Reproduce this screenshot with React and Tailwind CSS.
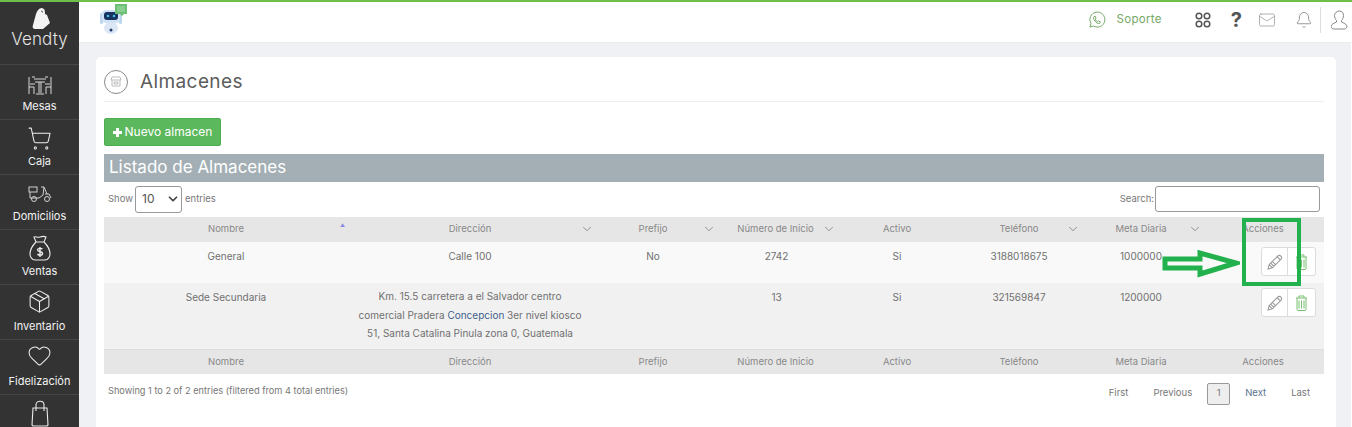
import React from "react";
import { ChevronDown, Bell, Mail, Heart, Package, ShoppingCart } from "lucide-react";

const F = { fontFamily: '"Inter", "Open Sans", sans-serif' };

function Tables() {
  return (
    <svg width="24" height="20" viewBox="0 0 24 20" fill="none" stroke="#d8d8d8" strokeWidth="1">
      <path d="M6 3h12M7 6h10M11 6v11M13 6v11M8 18h8M1 1v10h5v7M1 11v7M23 1v10h-5v7M23 11v7" />
      <path d="M2 8h5M17 8h5M4 1l3 0M17 1h3" />
    </svg>
  );
}
function Moto() {
  return (
    <svg width="24" height="18" viewBox="0 0 24 18" fill="none" stroke="#d0d0d0" strokeWidth="1">
      <rect x="1" y="2" width="8" height="5" />
      <path d="M2 7v6h9l4-3 1-8h-3M16 2l3 7M17 9h4l2 4" />
      <circle cx="6" cy="14" r="2.500" />
      <circle cx="19" cy="14" r="2.500" />
    </svg>
  );
}
function MoneyBag() {
  return (
    <svg width="22" height="26" viewBox="0 0 22 26" fill="none" stroke="#ececec" strokeWidth="1.100">
      <path d="M7 7 5 2c2-1 3 1 6 0s4-1 6 0l-2 5H7zM7 7c-3 3-6 7-6 12 0 3 2 6 5 6h10c3 0 5-3 5-6 0-5-3-9-6-12" />
      <path d="M13.500 14c-1-1-5-1-5 1s5 1 5 3.500-4 2-5 .5M11 12v10" strokeWidth="1.400" />
    </svg>
  );
}
function Bag() {
  return (
    <svg width="18" height="27" viewBox="0 0 18 27" fill="none" stroke="#ececec" strokeWidth="1.100">
      <path d="M2 8h14l1 17-1 1H2l-1-1z" />
      <path d="M5 11V5c0-5 8-5 8 0v6" />
    </svg>
  );
}
function Item({ icon, label, iconCls = "" }) {
  return (
    <div className="h-[55px] border-t border-[#464646] flex flex-col items-center shrink-0">
      <div className={`h-[31px] w-full flex items-end justify-center ${iconCls}`}>{icon}</div>
      <div className="mt-[3px] text-[11px] leading-[14px] text-[#f2f2f2]">{label}</div>
    </div>
  );
}
function Sidebar() {
  return (
    <aside className="w-[79px] shrink-0 h-full bg-[#333333] overflow-hidden flex flex-col">
      <div className="h-[62px] shrink-0 flex flex-col items-center pt-[6px]">
        <svg className="ml-[2px]" width="18" height="21" viewBox="0 0 18 21" fill="#f4f4f4">
          <path d="M4 6C5 3 7 0 10 0c3 1 3 3 3 6l2 1 3 8-7 6H3c-2 0-3-2-2-4z" />
          <path d="M9 3.500c1-1 2 0 1.500 1" stroke="#333" strokeWidth="0.800" fill="none" />
        </svg>
        <div className="text-[17px] leading-[20px] text-[#e4e4e4] tracking-[0.1px] font-light">Vendty</div>
      </div>
      <Item icon={<Tables />} label="Mesas" />
      <Item icon={<ShoppingCart size={25} strokeWidth={1} color="#eeeeee" />} label="Caja" />
      <Item icon={<Moto />} label="Domicilios" iconCls="pb-[3px]" />
      <Item icon={<MoneyBag />} label="Ventas" />
      <Item icon={<Package size={25} strokeWidth={1} color="#eeeeee" />} label="Inventario" iconCls="pb-[2px]" />
      <Item icon={<Heart size={25} strokeWidth={1} color="#eeeeee" />} label="Fidelización" iconCls="pb-[3px]" />
      <div className="h-[40px] border-t border-[#464646] flex justify-center pt-[5px] shrink-0"><Bag /></div>
    </aside>
  );
}
function Bot() {
  return (
    <svg width="28" height="31" viewBox="0 0 28 31">
      <ellipse cx="11" cy="24" rx="7" ry="6" fill="#dbe7f5" />
      <circle cx="11" cy="26" r="1.500" fill="#1f3a68" />
      <rect x="0" y="9" width="3" height="11" rx="1.500" fill="#bcd6f0" />
      <rect x="19" y="9" width="3" height="11" rx="1.500" fill="#bcd6f0" />
      <rect x="2" y="6" width="18" height="13" rx="4" fill="#cfe2f6" />
      <rect x="4" y="8" width="14" height="8" rx="3" fill="#17335f" />
      <circle cx="8" cy="12" r="1.300" fill="#3fc0e0" />
      <circle cx="14" cy="12" r="1.300" fill="#3fc0e0" />
      <path d="M15 0h12v10h-3l-2 2-2-2h-5z" fill="#6bbf73" />
      <path d="M17 3h8M17 5h8M17 7h8" stroke="#a8dcae" strokeWidth="1" />
    </svg>
  );
}
function Whatsapp() {
  return (
    <svg width="18" height="18" viewBox="0 0 18 18" fill="none" stroke="#76a867" strokeWidth="1">
      <path d="M2 16 3 12.500A7.500 7.500 0 1 1 5.500 15z" />
      <path d="M6 5.500c-1 1-.5 2.500 1 4.500s3 3 4.500 2.500l1-1.500-2-1-1 .7c-1-.5-2-1.700-2.300-2.700l.8-.8-.8-2z" />
    </svg>
  );
}
function UserBust() {
  return (
    <svg width="17" height="20" viewBox="0 0 17 20" fill="none" stroke="#888" strokeWidth="1">
      <path d="M8.500 1c2.700 0 4 2 4 4.500 0 2-1 4-2 5v1.500c2 1 5 2 5.500 4 .2 1.500-1 3-3 3H3c-2 0-3.200-1.500-3-3 .5-2 3.500-3 5.500-4v-1.500c-1-1-2-3-2-5C3.500 3 5.800 1 8.500 1z" />
    </svg>
  );
}
function Topbar() {
  return (
    <header className="h-[41px] shrink-0 bg-white flex items-center pl-[21px] pr-[4px] border-b border-[#ececec]">
      <div className="-mt-[5px]"><Bot /></div>
      <div className="ml-auto flex items-center -mt-[4px]">
        <Whatsapp />
        <span className="ml-[11px] text-[11.500px] text-[#76a867] tracking-[0.300px]">Soporte</span>
        <svg className="ml-[33px]" width="16" height="16" viewBox="0 0 16 16" fill="none" stroke="#555" strokeWidth="1.500">
          <circle cx="4" cy="4" r="2.800" /><circle cx="12" cy="4" r="2.800" /><circle cx="4" cy="12" r="2.800" /><circle cx="12" cy="12" r="2.800" />
        </svg>
        <span className="ml-[20px] text-[20px] leading-[20px] font-bold text-[#555]">?</span>
        <Mail className="ml-[16px]" size={18} strokeWidth={1} color="#9a9a9a" />
        <Bell className="ml-[19px]" size={18} strokeWidth={1} color="#777" />
        <div className="ml-[7px] w-px h-[26px] bg-[#dddddd]" />
        <div className="ml-[10px]"><UserBust /></div>
      </div>
    </header>
  );
}
const cols = [
  ["Nombre", "w-[244px]", 0, ""],
  ["Dirección", "w-[248px]", 1, "pr-[4px]"],
  ["Prefijo", "w-[122px]", 1, "pr-[8px]"],
  ["Número de Inicio", "w-[120px]", 1, "pr-[5px]"],
  ["Activo", "w-[118px]", 0, ""],
  ["Teléfono", "w-[126px]", 1, ""],
  ["Meta Diaria", "w-[122px]", 1, "pr-[4px]"],
  ["Acciones", "w-[120px]", 0, "pr-[2px]"],
];
function PencilIcon() {
  return (
    <svg width="16" height="16" viewBox="0 0 15 15" fill="none" stroke="#999" strokeWidth="1">
      <path d="M1 14l1-4 8-8c1-1 2-1 3 0s1 2 0 3l-8 8-4 1zM2 10l3 3M9.500 2.500l3 3M3.500 8.500l3 3M5 7l3 3" />
    </svg>
  );
}
function TrashIcon() {
  return (
    <svg width="13" height="16" viewBox="0 0 13 16" fill="none" stroke="#78c070" strokeWidth="1">
      <path d="M1 3h11M4 3V1h5v2M2 3v11.500c0 .5.500 1 1 1h7c.5 0 1-.5 1-1V3" />
      <path d="M4 5.500v8M6.500 5.500v8M9 5.500v8" />
    </svg>
  );
}
function Actions() {
  return (
    <div className="inline-flex h-[29px] bg-white border border-[#dcdcdc] rounded-[3px] mr-[8px] align-top">
      <div className="w-[26px] flex items-center justify-center border-r border-[#dcdcdc]"><PencilIcon /></div>
      <div className="w-[27px] flex items-center justify-center"><TrashIcon /></div>
    </div>
  );
}
function Td({ children, cls = "" }) {
  return <td className={`align-top text-center text-[10px] text-[#707070] pt-[7px] ${cls}`}>{children}</td>;
}
function Table() {
  return (
    <table className="w-[1220px] table-fixed border-collapse mt-[4px]">
      <colgroup>{cols.map((c) => <col key={c[0]} className={c[1]} />)}</colgroup>
      <thead>
        <tr className="h-[25px] bg-[#e6e6e6]">
          {cols.map((c, i) => (
            <th key={c[0]} className={`relative font-normal text-[9.500px] text-[#888] ${c[3]}`}>
              {c[0]}
              {c[2] === 1 && <ChevronDown className="absolute right-[2px] top-[5px]" size={14} strokeWidth={1} color="#555" />}
              {i === 0 && <span className="absolute right-[3px] top-[5px] text-[5px] text-[#8a8ae0]">▲</span>}
            </th>
          ))}
        </tr>
      </thead>
      <tbody>
        <tr className="h-[41px] bg-[#f9f9f9]">
          <Td>General</Td>
          <Td cls="pr-[4px]">Calle 100</Td>
          <Td cls="pr-[8px]">No</Td>
          <Td cls="pr-[3px]">2742</Td>
          <Td>Si</Td>
          <Td>3188018675</Td>
          <Td cls="pr-[4px]">1000000</Td>
          <td className="align-top text-right pt-[5px]"><Actions /></td>
        </tr>
        <tr className="h-[66px] bg-[#f1f1f1] border-b border-[#dddddd]">
          <Td>Sede Secundaria</Td>
          <td className="align-top text-center text-[10px] leading-[18.500px] text-[#707070] pt-[4px] pr-[4px]">
            <div>Km. 15.5 carretera a el Salvador centro</div>
            <div className="whitespace-nowrap">comercial Pradera <span className="text-[#3f5f8a]">Concepcion</span> 3er nivel kiosco</div>
            <div className="whitespace-nowrap">51, Santa Catalina Pinula zona 0, Guatemala</div>
          </td>
          <Td></Td>
          <Td cls="pr-[3px]">13</Td>
          <Td>Si</Td>
          <Td>321569847</Td>
          <Td cls="pr-[4px]">1200000</Td>
          <td className="align-top text-right pt-[5px]"><Actions /></td>
        </tr>
      </tbody>
      <tfoot>
        <tr className="h-[25px] bg-[#e6e6e6]">
          {cols.map((c) => (
            <th key={c[0]} className={`font-normal text-[9.500px] text-[#888] ${c[3]}`}>{c[0]}</th>
          ))}
        </tr>
      </tfoot>
    </table>
  );
}
function Annotation() {
  return (
    <>
      <div className="absolute left-[1242px] top-[218px] w-[59px] h-[68px] border-[4px] border-[#22b14c]" />
      <svg className="absolute left-[1162px] top-[249px]" width="78" height="30" viewBox="0 0 78 30" fill="none">
        <path d="M3 10H38V4L74 14 38 25V19H3z" stroke="#22b14c" strokeWidth="5" />
      </svg>
    </>
  );
}
export default function App() {
  return (
    <div className="relative w-[1352px] h-[427px] overflow-hidden bg-[#eff1f5] border-t-2 border-[#6cc04a]" style={F}>
      <div className="flex h-full">
        <Sidebar />
        <div className="flex-1 min-w-0 flex flex-col">
          <Topbar />
          <main className="flex-1 min-h-0 pt-[14px] pl-[17px] pr-[16px]">
            <section className="h-[400px] bg-white rounded-[5px] pt-[11px] px-[8px]">
              <div className="w-[1220px] h-[34px] flex items-center border-b border-[#eeeeee] pb-[6px]">
                <div className="w-[24px] h-[24px] rounded-full border border-[#8a8a8a] flex items-center justify-center">
                  <svg width="12" height="11" viewBox="0 0 12 11" fill="none" stroke="#bdbdbd"><path d="M1 4 2 1h8l1 3H1zM2 4v6h8V4M4 6h4v2H4z" /></svg>
                </div>
                <h1 className="ml-[12px] mt-[1px] text-[19px] text-[#5c5c5c] tracking-[0.400px]">Almacenes</h1>
              </div>
              <button className="mt-[16px] h-[28px] w-[117px] bg-[#5cb85c] border border-[#4cae4c] rounded-[2px] text-white text-[12px] flex items-center justify-center">
                <svg className="mr-[3px]" width="9" height="9" viewBox="0 0 9 9" fill="#fff"><path d="M3 0h3v3h3v3H6v3H3V6H0V3h3z" /></svg>
                Nuevo almacen
              </button>
              <div className="w-[1220px] h-[28px] mt-[8px] bg-[#a3afb5] text-white text-[17px] pl-[5px] leading-[27px]">Listado de Almacenes</div>
              <div className="w-[1220px] flex items-center h-[31px] text-[9.500px] text-[#777] pt-[3px]">
                <span className="ml-[4px]">Show</span>
                <div className="ml-[2px] w-[47px] h-[27px] border border-[#999] rounded-[3px] flex items-center pl-[6px] text-[12px] text-[#555]">
                  10<ChevronDown className="ml-auto mr-[1px]" size={14} strokeWidth={3} color="#444" />
                </div>
                <span className="ml-[3px]">entries</span>
                <span className="ml-auto mr-[1px]">Search:</span>
                <div className="w-[165px] h-[26px] border border-[#999] rounded-[3px] mr-[4px]" />
              </div>
              <Table />
              <div className="w-[1220px] flex items-center justify-between h-[41px] text-[9.200px] text-[#777]">
                <span className="ml-[4px] -mt-[7px]">Showing 1 to 2 of 2 entries (filtered from 4 total entries)</span>
                <div className="flex items-center mr-[14px] -mt-[2px] text-[9.500px]">
                  <span className="mr-[25px]">First</span>
                  <span className="mr-[15px]">Previous</span>
                  <span className="w-[23px] h-[22px] border border-[#999] rounded-[2px] bg-[#eeeeee] flex items-center justify-center">1</span>
                  <span className="ml-[15px] text-[#5a7390]">Next</span>
                  <span className="ml-[25px]">Last</span>
                </div>
              </div>
            </section>
          </main>
        </div>
      </div>
      <div className="absolute right-0 top-0 bottom-0 w-px bg-white" />
      <div className="absolute top-[-2px] left-0"><Annotation /></div>
    </div>
  );
}
